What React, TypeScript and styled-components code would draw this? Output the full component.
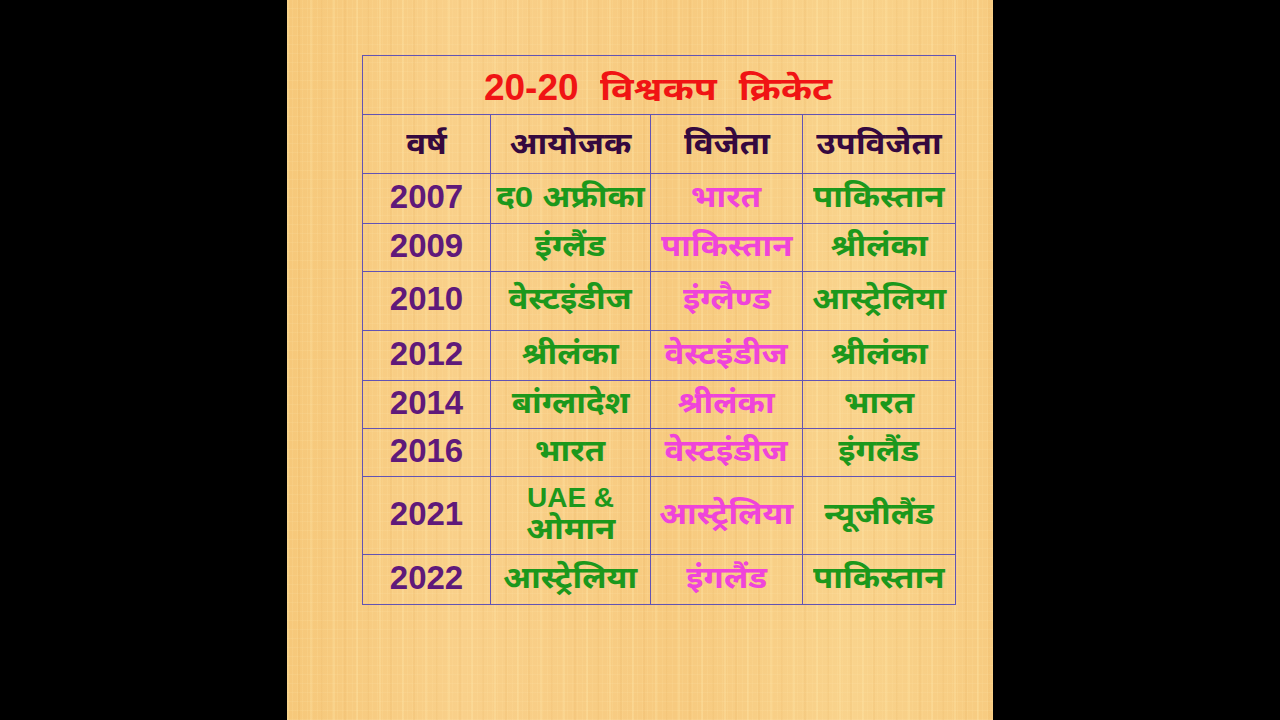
import styled, { createGlobalStyle } from 'styled-components';

const GlobalStyle = createGlobalStyle`
  html, body {
    margin: 0;
    padding: 0;
    background: #000;
  }
  body {
    font-family: "Liberation Sans", "Noto Sans Devanagari", "Noto Sans", sans-serif;
  }
`;

type Tone = 'green' | 'pink';

interface Row {
  year: string;
  host: string;
  winner: string;
  runner: string;
  height: number;
}

const rows: Row[] = [
  { year: '2007', host: 'द0 अफ्रीका', winner: 'भारत', runner: 'पाकिस्तान', height: 50 },
  { year: '2009', host: 'इंग्लैंड', winner: 'पाकिस्तान', runner: 'श्रीलंका', height: 48 },
  { year: '2010', host: 'वेस्टइंडीज', winner: 'इंग्लैण्ड', runner: 'आस्ट्रेलिया', height: 59 },
  { year: '2012', host: 'श्रीलंका', winner: 'वेस्टइंडीज', runner: 'श्रीलंका', height: 50 },
  { year: '2014', host: 'बांग्लादेश', winner: 'श्रीलंका', runner: 'भारत', height: 48 },
  { year: '2016', host: 'भारत', winner: 'वेस्टइंडीज', runner: 'इंगलैंड', height: 48 },
  { year: '2021', host: 'UAE &\nओमान', winner: 'आस्ट्रेलिया', runner: 'न्यूजीलैंड', height: 78 },
  { year: '2022', host: 'आस्ट्रेलिया', winner: 'इंगलैंड', runner: 'पाकिस्तान', height: 50 },
];

const Screen = styled.div`
  width: 1280px;
  height: 720px;
  background: #000;
  display: flex;
  justify-content: center;
`;

const Paper = styled.div`
  width: 706px;
  height: 720px;
  box-sizing: border-box;
  padding: 55px 0 0 75px;
  background-color: #f8cd82;
  background-image:
    repeating-linear-gradient(90deg, rgba(255, 232, 170, 0.28) 0 2px, transparent 2px 11px, rgba(225, 165, 80, 0.12) 11px 13px, transparent 13px 23px),
    repeating-linear-gradient(90deg, rgba(255, 226, 160, 0.18) 0 1px, transparent 1px 5px),
    repeating-linear-gradient(0deg, rgba(255, 236, 185, 0.12) 0 1px, transparent 1px 9px),
    linear-gradient(90deg, #f6c87a 0%, #f9d08a 25%, #f7ca7f 55%, #f9d38c 80%, #f7cb80 100%);
`;

const Table = styled.table`
  border-collapse: collapse;
  width: 593px;
  table-layout: fixed;
  text-align: center;
  font-weight: 700;
  td, th {
    border: 1px solid #6253b4;
    padding: 0;
  }
`;

const TitleRow = styled.tr`
  height: 59px;
`;

const HeadRow = styled.tr`
  height: 59px;
`;

const TitleCell = styled.th`
  color: #f01414;
  font-weight: 700;
`;

const TitleLine = styled.div`
  display: flex;
  justify-content: center;
  align-items: baseline;
  gap: 21px;
  padding-top: 6px;
`;

const TitleNum = styled.span`
  font-size: 37px;
  line-height: 40px;
`;

const TitleText = styled.span`
  display: inline-block;
  font-size: 32px;
  line-height: 40px;
  word-spacing: 10px;
  transform: scaleX(1.17);
  transform-origin: left center;
  margin-right: 36px;
`;

const HeadCell = styled.th`
  color: #35093f;
  font-weight: 700;
`;

const Dev = styled.span`
  display: inline-block;
  font-size: 30px;
  line-height: 28px;
  transform: scaleX(1.1);
  white-space: pre;
`;

const YearCell = styled.td`
  color: #5f197a;
  font-size: 33px;
  line-height: 33px;
  padding-bottom: 5px !important;
`;

const NameCell = styled.td<{ $tone: Tone }>`
  color: ${(p) => (p.$tone === 'green' ? '#1c981c' : '#ef44da')};
  padding-bottom: 4px !important;
`;

const Stack = styled.span`
  display: inline-flex;
  flex-direction: column;
  align-items: center;
`;

const Latin = styled.span`
  font-size: 28px;
  line-height: 30px;
`;

const StackDev = styled(Dev)`
  line-height: 32px;
`;

function Name({ text }: { text: string }) {
  if (text.includes('\n')) {
    const [a, b] = text.split('\n');
    return (
      <Stack>
        <Latin>{a}</Latin>
        <StackDev>{b}</StackDev>
      </Stack>
    );
  }
  return <Dev>{text}</Dev>;
}

export default function App() {
  return (
    <>
      <GlobalStyle />
      <Screen>
        <Paper>
          <Table>
            <colgroup>
              <col style={{ width: 128 }} />
              <col style={{ width: 160 }} />
              <col style={{ width: 152 }} />
              <col style={{ width: 153 }} />
            </colgroup>
            <thead>
              <TitleRow>
                <TitleCell colSpan={4}>
                  <TitleLine>
                    <TitleNum>20-20</TitleNum>
                    <TitleText>विश्वकप क्रिकेट</TitleText>
                  </TitleLine>
                </TitleCell>
              </TitleRow>
              <HeadRow>
                <HeadCell><Dev>वर्ष</Dev></HeadCell>
                <HeadCell><Dev>आयोजक</Dev></HeadCell>
                <HeadCell><Dev>विजेता</Dev></HeadCell>
                <HeadCell><Dev>उपविजेता</Dev></HeadCell>
              </HeadRow>
            </thead>
            <tbody>
              {rows.map((r) => (
                <tr key={r.year} style={{ height: r.height }}>
                  <YearCell>{r.year}</YearCell>
                  <NameCell $tone="green"><Name text={r.host} /></NameCell>
                  <NameCell $tone="pink"><Name text={r.winner} /></NameCell>
                  <NameCell $tone="green"><Name text={r.runner} /></NameCell>
                </tr>
              ))}
            </tbody>
          </Table>
        </Paper>
      </Screen>
    </>
  );
}
